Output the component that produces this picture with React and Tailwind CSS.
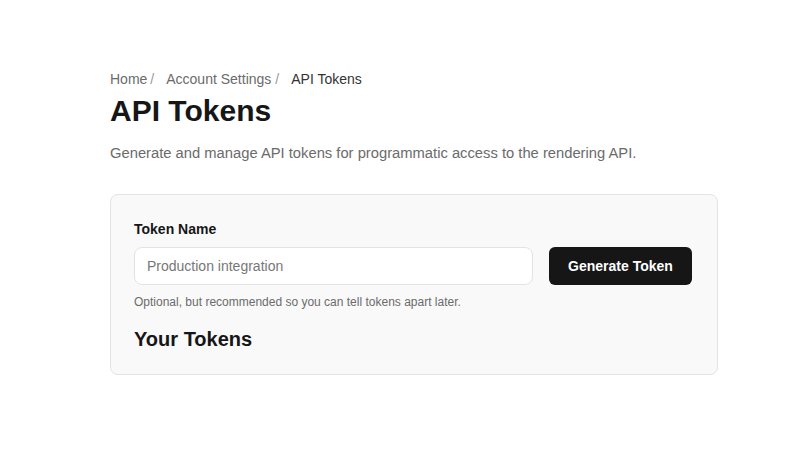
import React from "react";

const App = () => {
  return (
    <div className="min-h-[455px] w-full bg-white font-['Liberation_Sans',Arial,sans-serif] text-[#161616]">
      <div className="ml-[110px] w-[608px] pt-[70px]">
        <nav className="flex items-center text-[14px] leading-[18px] text-[#6b6b6b]">
          <span>Home</span>
          <span className="ml-[3px] text-[#9a9a9a]">/</span>
          <span className="ml-[12px]">Account Settings</span>
          <span className="ml-[4px] text-[#9a9a9a]">/</span>
          <span className="ml-[12px] text-[#333]">API Tokens</span>
        </nav>
        <h1 className="mt-[3px] text-[30px] font-bold leading-[40px]">API Tokens</h1>
        <p className="mt-[12px] text-[14.75px] leading-[21px] text-[#6b6b6b]">
          Generate and manage API tokens for programmatic access to the rendering API.
        </p>

        <section className="mt-[30px] rounded-[8px] border border-[#e3e3e3] bg-[#f9f9f9] px-[23px] pt-[25px] pb-[22px]">
          <label className="block text-[14px] font-bold leading-[18px]">Token Name</label>
          <div className="mt-[9px] flex gap-[16px]">
            <input
              type="text"
              placeholder="Production integration"
              className="h-[38px] w-[399px] rounded-[8px] border border-[#e3e3e3] bg-white px-[12px] text-[14px] text-[#161616] placeholder:text-[#777] outline-none"
            />
            <button className="h-[38px] w-[143px] rounded-[6px] bg-[#161616] text-[14px] font-bold text-white">
              Generate Token
            </button>
          </div>
          <p className="mt-[9px] text-[12px] leading-[16px] text-[#6b6b6b]">
            Optional, but recommended so you can tell tokens apart later.
          </p>
          <h2 className="mt-[16px] text-[20px] font-bold leading-[26px]">Your Tokens</h2>
        </section>
      </div>
    </div>
  );
};

export default App;
